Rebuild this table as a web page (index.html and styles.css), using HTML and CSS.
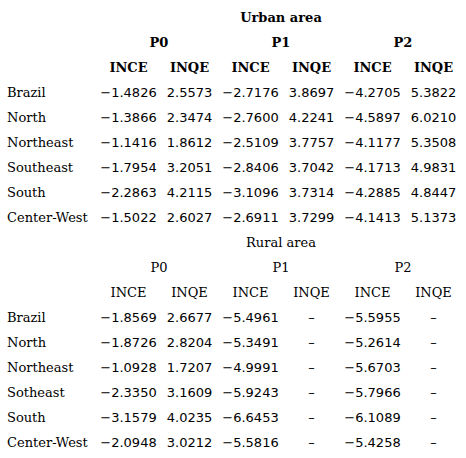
FILE: index.html
```html
<!DOCTYPE html>
<html lang="en">
<head>
    <meta charset="UTF-8">
    <title>Poverty indices by region</title>
    <link rel="stylesheet" href="styles.css">
</head>
<body>
    <table class="results">
        <colgroup>
            <col class="col-label">
            <col class="col-num"><col class="col-num">
            <col class="col-num"><col class="col-num">
            <col class="col-num"><col class="col-num">
        </colgroup>
        <tbody class="urban">
            <tr><td></td><th colspan="6">Urban area</th></tr>
            <tr><td></td><th colspan="2">P0</th><th colspan="2">P1</th><th colspan="2">P2</th></tr>
            <tr><td></td><th>INCE</th><th>INQE</th><th>INCE</th><th>INQE</th><th>INCE</th><th>INQE</th></tr>
            <tr><td class="region">Brazil</td><td>−1.4826</td><td>2.5573</td><td>−2.7176</td><td>3.8697</td><td>−4.2705</td><td>5.3822</td></tr>
            <tr><td class="region">North</td><td>−1.3866</td><td>2.3474</td><td>−2.7600</td><td>4.2241</td><td>−4.5897</td><td>6.0210</td></tr>
            <tr><td class="region">Northeast</td><td>−1.1416</td><td>1.8612</td><td>−2.5109</td><td>3.7757</td><td>−4.1177</td><td>5.3508</td></tr>
            <tr><td class="region">Southeast</td><td>−1.7954</td><td>3.2051</td><td>−2.8406</td><td>3.7042</td><td>−4.1713</td><td>4.9831</td></tr>
            <tr><td class="region">South</td><td>−2.2863</td><td>4.2115</td><td>−3.1096</td><td>3.7314</td><td>−4.2885</td><td>4.8447</td></tr>
            <tr><td class="region">Center-West</td><td>−1.5022</td><td>2.6027</td><td>−2.6911</td><td>3.7299</td><td>−4.1413</td><td>5.1373</td></tr>
        </tbody>
        <tbody class="rural">
            <tr><td></td><th colspan="6">Rural area</th></tr>
            <tr><td></td><th colspan="2">P0</th><th colspan="2">P1</th><th colspan="2">P2</th></tr>
            <tr><td></td><th>INCE</th><th>INQE</th><th>INCE</th><th>INQE</th><th>INCE</th><th>INQE</th></tr>
            <tr><td class="region">Brazil</td><td>−1.8569</td><td>2.6677</td><td>−5.4961</td><td>–</td><td>−5.5955</td><td>–</td></tr>
            <tr><td class="region">North</td><td>−1.8726</td><td>2.8204</td><td>−5.3491</td><td>–</td><td>−5.2614</td><td>–</td></tr>
            <tr><td class="region">Northeast</td><td>−1.0928</td><td>1.7207</td><td>−4.9991</td><td>–</td><td>−5.6703</td><td>–</td></tr>
            <tr><td class="region">Sotheast</td><td>−2.3350</td><td>3.1609</td><td>−5.9243</td><td>–</td><td>−5.7966</td><td>–</td></tr>
            <tr><td class="region">South</td><td>−3.1579</td><td>4.0235</td><td>−6.6453</td><td>–</td><td>−6.1089</td><td>–</td></tr>
            <tr><td class="region">Center-West</td><td>−2.0948</td><td>3.0212</td><td>−5.5816</td><td>–</td><td>−5.4258</td><td>–</td></tr>
        </tbody>
    </table>
</body>
</html>
```

FILE: styles.css
```css
body {
    margin: 0;
    background: #ffffff;
    color: #000000;
}

.results {
    border-collapse: collapse;
    table-layout: fixed;
    margin: 5px 0 0 7px;
    width: 457px;
}

.col-label {
    width: 91px;
}

.col-num {
    width: 61px;
}

.results td,
.results th {
    height: 25px;
    padding: 0;
    vertical-align: middle;
    text-align: center;
    white-space: nowrap;
    font-family: "DejaVu Sans", Verdana, sans-serif;
    font-size: 13px;
}

.results th {
    font-family: "DejaVu Serif", serif;
    font-weight: bold;
}

.results .rural th {
    font-weight: normal;
}

.results td.region {
    text-align: left;
    font-family: "DejaVu Serif", serif;
}
```
